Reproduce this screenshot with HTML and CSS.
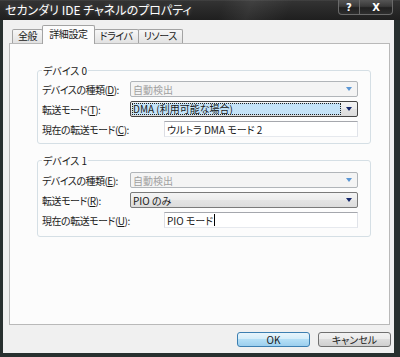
FILE: index.html
```html
<!DOCTYPE html>
<html lang="ja">
<head>
<meta charset="utf-8">
<title>セカンダリ IDE チャネルのプロパティ</title>
<link rel="stylesheet" href="styles.css">
</head>
<body>
<div class="window">
  <div class="titlebar">
    <span class="title">セカンダリ IDE チャネルのプロパティ</span>
    <div class="caps"><span class="cap cap-help">?</span><span class="cap cap-close">X</span></div>
  </div>
  <div class="client">
    <div class="tabs">
      <span class="tab">全般</span><span class="tab tab-active">詳細設定</span><span class="tab">ドライバ</span><span class="tab">リソース</span>
    </div>
    <div class="panel">
      <fieldset class="group">
        <legend>デバイス 0</legend>
        <div class="row">
          <span class="lbl">デバイスの種類(<u>D</u>):</span>
          <div class="combo combo-disabled"><span class="val">自動検出</span><span class="arrow"></span></div>
        </div>
        <div class="row">
          <span class="lbl">転送モード(<u>T</u>):</span>
          <div class="combo combo-focus"><span class="val">DMA (利用可能な場合)</span><span class="arrow"></span></div>
        </div>
        <div class="row">
          <span class="lbl lbl-wide">現在の転送モード(<u>C</u>):</span>
          <div class="edit">ウルトラ DMA モード 2</div>
        </div>
      </fieldset>
      <fieldset class="group group-second">
        <legend>デバイス 1</legend>
        <div class="row">
          <span class="lbl">デバイスの種類(<u>E</u>):</span>
          <div class="combo combo-disabled"><span class="val">自動検出</span><span class="arrow"></span></div>
        </div>
        <div class="row">
          <span class="lbl">転送モード(<u>R</u>):</span>
          <div class="combo"><span class="val">PIO のみ</span><span class="arrow"></span></div>
        </div>
        <div class="row">
          <span class="lbl lbl-wide">現在の転送モード(<u>U</u>):</span>
          <div class="edit">PIO モード<span class="caret"></span></div>
        </div>
      </fieldset>
    </div>
    <div class="buttons">
      <button class="btn btn-default">OK</button>
      <button class="btn">キャンセル</button>
    </div>
  </div>
</div>
</body>
</html>
```
FILE: styles.css
```css
body {
  margin: 0;
}

.window {
  width: 400px;
  height: 357px;
  display: flex;
  flex-direction: column;
  background: #28302f;
  font-family: "Noto Sans CJK JP", "Noto Sans", sans-serif;
  font-size: 10px;
  line-height: 13px;
  font-feature-settings: "palt";
  color: #1a1a1a;
}

.titlebar {
  height: 20px;
  flex: none;
  display: flex;
  justify-content: space-between;
  align-items: flex-start;
  padding: 0 7px 0 5px;
  background:
    linear-gradient(110deg, rgba(255,255,255,0) 55%, rgba(255,255,255,0.07) 62%, rgba(255,255,255,0) 72%),
    linear-gradient(#4a4a4a 0, #333 1px, #2b2b2b 40%, #1f1f1f 100%);
}

.title {
  color: #fff;
  font-size: 12px;
  line-height: 20px;
  text-shadow: 0 0 4px rgba(255,255,255,0.25);
}

.caps {
  display: flex;
  height: 14px;
  border: 1px solid #6a6a6a;
  border-top: none;
  border-radius: 0 0 4px 4px;
  overflow: hidden;
  background: linear-gradient(#555 0, #3a3a3a 45%, #202020 55%, #2e2e2e 100%);
}

.cap {
  display: flex;
  align-items: center;
  justify-content: center;
  color: #fff;
  font-family: "DejaVu Sans", sans-serif;
  font-weight: bold;
  font-size: 10px;
}

.cap-help {
  width: 20px;
  border-right: 1px solid #6a6a6a;
}

.cap-close {
  width: 32px;
}

.client {
  flex: 1;
  display: flex;
  flex-direction: column;
  margin: 0 6px 4px 3px;
  padding: 0 4px 6px 6px;
  background: #f0f0f0;
}

.tabs {
  display: flex;
  align-items: flex-start;
  height: 19px;
  margin-top: 5px;
  padding-left: 3px;
  flex: none;
}

.tab {
  box-sizing: border-box;
  height: 14px;
  margin-top: 4px;
  padding: 0 5px;
  border: 1px solid #a3a3a3;
  border-bottom: none;
  border-radius: 2px 2px 0 0;
  background: linear-gradient(#f7f7f7, #e2e2e2);
  line-height: 12px;
  letter-spacing: -0.4px;
  white-space: nowrap;
}

.tab + .tab {
  margin-left: -1px;
}

.tab-active {
  position: relative;
  z-index: 1;
  height: 19px;
  margin-top: 0;
  padding: 2px 6px 0;
  background: #fcfcfc;
}

.panel {
  flex: 1;
  margin-top: -1px;
  border: 1px solid #b9b9b9;
  background: #fcfcfc;
}

.group {
  margin: 20px 18px 0 27px;
  padding: 4px 12px 6px 4px;
  border: 1px solid #d5dfe5;
  border-radius: 3px;
  min-width: 0;
}

.group legend {
  padding: 0 1px;
  line-height: 13px;
}

.group-second {
  margin-top: 10px;
  padding-top: 5px;
  padding-bottom: 8px;
}

.row {
  display: flex;
  align-items: center;
  height: 16px;
}

.row + .row {
  margin-top: 4px;
}

.lbl {
  width: 88px;
  flex: none;
  white-space: nowrap;
  letter-spacing: -0.5px;
}

.lbl-wide {
  width: 122px;
}

.combo {
  flex: 1;
  box-sizing: border-box;
  height: 16px;
  display: flex;
  align-items: center;
  border: 1px solid #7a7a7a;
  border-radius: 2px;
  background: linear-gradient(#f4f4f4, #ececec 50%, #e4e4e4 50%, #dcdcdc);
}

.combo .val {
  flex: 1;
  padding-left: 2px;
  white-space: nowrap;
}

.combo .arrow {
  width: 16px;
  height: 14px;
  display: flex;
  align-items: center;
  justify-content: center;
}

.combo .arrow::before {
  content: "";
  border-left: 3px solid transparent;
  border-right: 3px solid transparent;
  border-top: 4px solid #15286b;
}

.combo-disabled {
  border-color: #b1b5b9;
  background: #f4f4f4;
  color: #a0a0a0;
}

.combo-disabled .arrow::before {
  border-top-color: #5b97d5;
}

.combo-focus {
  border-color: #444;
}

.combo-focus .val {
  align-self: stretch;
  margin: 1px 0 1px 1px;
  padding-left: 1px;
  background: #c4e3f8;
  outline: 1px dotted #222;
  outline-offset: -1px;
  line-height: 12px;
}

.edit {
  flex: 1;
  box-sizing: border-box;
  height: 16px;
  display: flex;
  align-items: center;
  padding-left: 2px;
  border: 1px solid;
  border-color: #a5a7ad #e0e3e9 #e6e9ee #dcdde3;
  background: #fff;
  white-space: nowrap;
}

.caret {
  width: 0;
  height: 12px;
  margin-left: 1px;
  border-left: 1px solid #000;
}

.buttons {
  flex: none;
  display: flex;
  justify-content: flex-end;
  gap: 8px;
  margin: 7px -1px 0 0;
}

.btn {
  width: 73px;
  height: 15px;
  padding: 0;
  box-sizing: border-box;
  border: 1px solid #707070;
  border-radius: 3px;
  background: linear-gradient(#f2f2f2, #ebebeb 45%, #dddddd 50%, #cfcfcf);
  font: inherit;
  font-feature-settings: "palt";
  line-height: 12px;
  color: #1a1a1a;
}

.btn-default {
  border-color: #3c7fb1;
  background: linear-gradient(#e8f5fc, #d4edfa 45%, #b4dff6 50%, #9ccfee);
}
```
